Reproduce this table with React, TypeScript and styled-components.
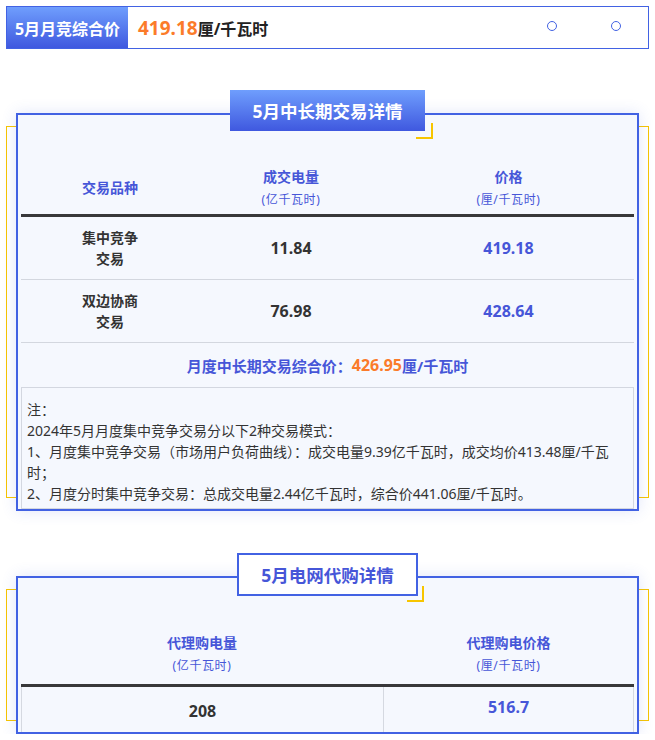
import React from "react";
import styled, { createGlobalStyle, css } from "styled-components";

const BLUE = "#4262e3";
const TEXT_BLUE = "#4656d8";
const ORANGE = "#fb7b2a";
const YELLOW = "#f7c500";
const DARK = "#333333";

const GlobalStyle = createGlobalStyle`
  html, body { margin: 0; padding: 0; background: #ffffff; }
  body { font-family: "Noto Sans", "Noto Sans CJK SC", sans-serif; }
  * { box-sizing: border-box; }
`;

const Page = styled.div`
  padding: 6px 6px 0;
`;

const TopBar = styled.div`
  height: 43px;
  border: 1px solid ${BLUE};
  display: flex;
  align-items: stretch;
  background: #fff;
`;

const BarLabel = styled.div`
  width: 121px;
  display: flex;
  align-items: center;
  justify-content: center;
  background: linear-gradient(180deg, #6f9efd 0%, #3f58df 100%);
  color: #fff;
  font-weight: 700;
  font-size: 16px;
`;

const BarValue = styled.div`
  display: flex;
  align-items: center;
  padding-left: 10px;
  color: #222;
  font-weight: 700;
  font-size: 16px;
`;

const Orange = styled.span<{ $size: number }>`
  color: ${ORANGE};
  font-weight: 700;
  font-size: ${(p) => p.$size}px;
`;

const Dots = styled.div`
  margin-left: auto;
  display: flex;
  align-items: center;
  gap: 54px;
  padding: 0 27px 3px 0;
`;

const Dot = styled.span`
  width: 10px;
  height: 10px;
  border: 1.5px solid ${BLUE};
  border-radius: 50%;
`;

const Section = styled.section<{ $top: number }>`
  margin-top: ${(p) => p.$top}px;
`;

const TitleRow = styled.div<{ $overlap: number }>`
  display: flex;
  justify-content: center;
  position: relative;
  z-index: 2;
  margin-bottom: -${(p) => p.$overlap}px;
`;

const Title = styled.div<{ $filled?: boolean }>`
  position: relative;
  display: flex;
  align-items: center;
  font-size: 17.5px;
  font-weight: 700;
  ${(p) =>
    p.$filled
      ? css`
          height: 41px;
          padding: 0 22px;
          color: #fff;
          background: linear-gradient(180deg, #6f9efd 0%, #3f58df 100%);
        `
      : css`
          height: 43px;
          padding: 0 22px;
          color: ${TEXT_BLUE};
          background: #fff;
          border: 2px solid ${BLUE};
        `}
  &::after {
    content: "";
    position: absolute;
    right: -8px;
    bottom: -8px;
    width: 15px;
    height: 14px;
    border-right: 2px solid ${YELLOW};
    border-bottom: 2px solid ${YELLOW};
  }
`;

const Frame = styled.div`
  position: relative;
  padding: 0 10px;
  &::before {
    content: "";
    position: absolute;
    left: 0;
    right: 0;
    top: 13px;
    bottom: 13px;
    border: 1px solid ${YELLOW};
  }
`;

const Panel = styled.div`
  position: relative;
  z-index: 1;
  border: 2px solid ${BLUE};
  background: #f5f8fe;
  box-shadow: 0 0 14px rgba(66, 98, 227, 0.16);
  padding: 0 3px;
`;

const Grid = styled.div<{ $cols: string }>`
  display: grid;
  grid-template-columns: ${(p) => p.$cols};
`;

const HeadRow = styled(Grid)<{ $height: number }>`
  height: ${(p) => p.$height}px;
  border-bottom: 3px solid #38383a;
`;

const HeadCell = styled.div<{ $pad: number }>`
  display: flex;
  flex-direction: column;
  align-items: center;
  justify-content: flex-end;
  padding-bottom: ${(p) => p.$pad}px;
  color: ${TEXT_BLUE};
  font-weight: 700;
  font-size: 14px;
  line-height: 22px;
`;

const HeadSub = styled.span`
  font-size: 12px;
  letter-spacing: 0.6px;
  font-weight: 400;
  line-height: 24px;
`;

const Row = styled(Grid)<{ $height: number; $boxed?: boolean }>`
  height: ${(p) => p.$height}px;
  ${(p) =>
    p.$boxed
      ? css`
          border-left: 1px solid #d5d9e1;
          border-right: 1px solid #d5d9e1;
        `
      : css`
          border-bottom: 1px solid #d3d7df;
        `}
`;

const Cell = styled.div<{ $divider?: boolean; $top?: number }>`
  display: flex;
  align-items: ${(p) => (p.$top !== undefined ? "flex-start" : "center")};
  justify-content: center;
  text-align: center;
  padding-top: ${(p) => p.$top ?? 0}px;
  ${(p) => p.$divider && css`border-right: 1px solid #d5d9e1;`}
`;

const RowLabel = styled.div`
  font-size: 14px;
  line-height: 21px;
  color: ${DARK};
  font-weight: 700;
`;

const Num = styled.span<{ $blue?: boolean }>`
  font-size: 16px;
  line-height: 22px;
  font-weight: 700;
  color: ${(p) => (p.$blue ? TEXT_BLUE : DARK)};
`;

const Summary = styled.div`
  height: 44px;
  display: flex;
  align-items: center;
  justify-content: center;
  color: ${TEXT_BLUE};
  font-weight: 700;
  font-size: 15px;
`;

const NoteBox = styled.div`
  border: 1px solid #d3d7e0;
  padding: 11px 6px 4px 5px;
  font-size: 14px;
  line-height: 21px;
  color: ${DARK};
`;

const rows = [
  { name: ["集中竞争", "交易"], qty: "11.84", price: "419.18" },
  { name: ["双边协商", "交易"], qty: "76.98", price: "428.64" },
];

const notes = [
  "注：",
  "2024年5月月度集中竞争交易分以下2种交易模式：",
  "1、月度集中竞争交易（市场用户负荷曲线）：成交电量9.39亿千瓦时，成交均价413.48厘/千瓦时；",
  "2、月度分时集中竞争交易：总成交电量2.44亿千瓦时，综合价441.06厘/千瓦时。",
];

const COLS1 = "178px 184px 1fr";
const COLS2 = "362px 1fr";

export default function App() {
  return (
    <>
      <GlobalStyle />
      <Page>
        <TopBar>
          <BarLabel>5月月竞综合价</BarLabel>
          <BarValue>
            <Orange $size={19}>419.18</Orange>厘/千瓦时
          </BarValue>
          <Dots>
            <Dot />
            <Dot />
          </Dots>
        </TopBar>

        <Section $top={41}>
          <TitleRow $overlap={18}>
            <Title $filled>5月中长期交易详情</Title>
          </TitleRow>
          <Frame>
            <Panel>
              <HeadRow $cols={COLS1} $height={102}>
                <HeadCell $pad={15}>交易品种</HeadCell>
                <HeadCell $pad={2}>
                  成交电量
                  <HeadSub>(亿千瓦时)</HeadSub>
                </HeadCell>
                <HeadCell $pad={2}>
                  价格
                  <HeadSub>(厘/千瓦时)</HeadSub>
                </HeadCell>
              </HeadRow>
              {rows.map((r) => (
                <Row key={r.qty} $cols={COLS1} $height={63}>
                  <Cell>
                    <RowLabel>
                      {r.name[0]}
                      <br />
                      {r.name[1]}
                    </RowLabel>
                  </Cell>
                  <Cell>
                    <Num>{r.qty}</Num>
                  </Cell>
                  <Cell>
                    <Num $blue>{r.price}</Num>
                  </Cell>
                </Row>
              ))}
              <Summary>
                月度中长期交易综合价：<Orange $size={16}>426.95</Orange>厘/千瓦时
              </Summary>
              <NoteBox>
                {notes.map((n) => (
                  <div key={n}>{n}</div>
                ))}
              </NoteBox>
            </Panel>
          </Frame>
        </Section>

        <Section $top={42}>
          <TitleRow $overlap={20}>
            <Title>5月电网代购详情</Title>
          </TitleRow>
          <Frame>
            <Panel>
              <HeadRow $cols={COLS2} $height={109}>
                <HeadCell $pad={6}>
                  代理购电量
                  <HeadSub>(亿千瓦时)</HeadSub>
                </HeadCell>
                <HeadCell $pad={6}>
                  代理购电价格
                  <HeadSub>(厘/千瓦时)</HeadSub>
                </HeadCell>
              </HeadRow>
              <Row $cols={COLS2} $height={45} $boxed>
                <Cell $divider $top={13}>
                  <Num>208</Num>
                </Cell>
                <Cell $top={9}>
                  <Num $blue>516.7</Num>
                </Cell>
              </Row>
            </Panel>
          </Frame>
        </Section>
      </Page>
    </>
  );
}
